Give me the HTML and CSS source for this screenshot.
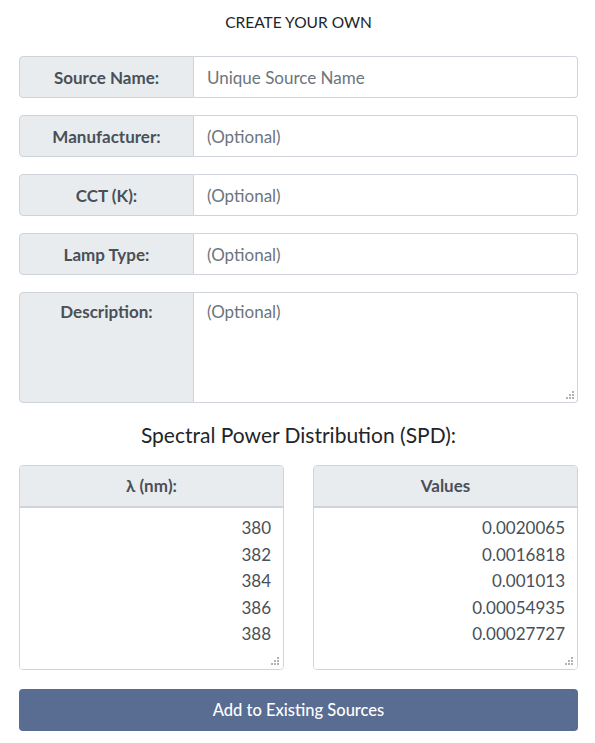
FILE: index.html
```html
<!DOCTYPE html>
<html>
<head>
<meta charset="utf-8">
<link rel="stylesheet" href="styles.css">
</head>
<body>
<div class="page">
  <h1 class="title">CREATE YOUR OWN</h1>
  <div class="group">
    <div class="label">Source Name:</div>
    <input class="field" type="text" placeholder="Unique Source Name">
  </div>
  <div class="group">
    <div class="label">Manufacturer:</div>
    <input class="field" type="text" placeholder="(Optional)">
  </div>
  <div class="group">
    <div class="label">CCT (K):</div>
    <input class="field" type="text" placeholder="(Optional)">
  </div>
  <div class="group">
    <div class="label">Lamp Type:</div>
    <input class="field" type="text" placeholder="(Optional)">
  </div>
  <div class="group group-tall">
    <div class="label label-top">Description:</div>
    <div class="area-wrap">
      <textarea class="field area" placeholder="(Optional)"></textarea>
      <svg class="grip" width="8" height="8" viewBox="0 0 8 8"><rect x="6" y="0" width="2" height="2"/><rect x="3" y="3" width="2" height="2"/><rect x="6" y="3" width="2" height="2"/><rect x="0" y="6" width="2" height="2"/><rect x="3" y="6" width="2" height="2"/><rect x="6" y="6" width="2" height="2"/></svg>
    </div>
  </div>
  <h2 class="spd">Spectral Power Distribution (SPD):</h2>
  <div class="cols">
    <div class="card">
      <div class="card-head">λ (nm):</div>
      <textarea class="card-body">380
382
384
386
388</textarea>
      <svg class="grip" width="8" height="8" viewBox="0 0 8 8"><rect x="6" y="0" width="2" height="2"/><rect x="3" y="3" width="2" height="2"/><rect x="6" y="3" width="2" height="2"/><rect x="0" y="6" width="2" height="2"/><rect x="3" y="6" width="2" height="2"/><rect x="6" y="6" width="2" height="2"/></svg>
    </div>
    <div class="card">
      <div class="card-head">Values</div>
      <textarea class="card-body">0.0020065
0.0016818
0.001013
0.00054935
0.00027727</textarea>
      <svg class="grip" width="8" height="8" viewBox="0 0 8 8"><rect x="6" y="0" width="2" height="2"/><rect x="3" y="3" width="2" height="2"/><rect x="6" y="3" width="2" height="2"/><rect x="0" y="6" width="2" height="2"/><rect x="3" y="6" width="2" height="2"/><rect x="6" y="6" width="2" height="2"/></svg>
    </div>
  </div>
  <button class="btn">Add to Existing Sources</button>
</div>
</body>
</html>
```
FILE: styles.css
```css
* { box-sizing: border-box; }
html, body { margin: 0; padding: 0; background: #fff; }
body {
  font-family: Lato, "Noto Sans", sans-serif;
  font-size: 17px;
  color: #212529;
}
.page {
  width: 559px;
  margin-left: 19px;
  padding-top: 12px;
}
.title {
  margin: 0 0 24px;
  font-size: 15.5px;
  font-weight: 400;
  text-align: center;
  line-height: 20px;
}
.group {
  display: flex;
  height: 42px;
  margin-bottom: 17px;
}
.group-tall { height: 111px; margin-bottom: 0; }
.label {
  width: 175px;
  flex: none;
  display: flex;
  align-items: center;
  justify-content: center;
  background: #e9ecef;
  border: 1px solid #ced4da;
  border-radius: 4px 0 0 4px;
  color: #495057;
  font-weight: 700;
  font-size: 17px;
}
.label-top { align-items: flex-start; padding-top: 8px; }
.field {
  flex: 1;
  min-width: 0;
  border: 1px solid #ced4da;
  border-left: none;
  border-radius: 0 4px 4px 0;
  padding: 0 13px;
  font-family: Lato, "Noto Sans", sans-serif;
  font-size: 17px;
  color: #495057;
  background: #fff;
  outline: none;
}
.field::placeholder { color: #6c757d; opacity: 1; }
.area-wrap {
  flex: 1;
  display: flex;
  position: relative;
}
.area {
  padding-top: 8px;
  resize: none;
  line-height: 22px;
}
.grip {
  position: absolute;
  right: 4px;
  bottom: 4px;
  fill: #b0b4b8;
}
.spd {
  margin: 0;
  height: 62px;
  display: flex;
  align-items: center;
  justify-content: center;
  font-size: 21px;
  font-weight: 400;
  color: #212529;
}
.cols {
  display: flex;
  justify-content: space-between;
}
.card {
  position: relative;
  width: 265px;
  height: 205px;
  display: flex;
  flex-direction: column;
  border: 1px solid #ced4da;
  border-radius: 4px;
  overflow: hidden;
}
.card-head {
  height: 42px;
  flex: none;
  display: flex;
  align-items: center;
  justify-content: center;
  padding-bottom: 2px;
  background: #e9ecef;
  border-bottom: 2px solid #ced4da;
  color: #495057;
  font-weight: 700;
}
.card-body {
  flex: 1;
  border: none;
  outline: none;
  resize: none;
  padding: 7px 12px 0 12px;
  text-align: right;
  font-family: Lato, "Noto Sans", sans-serif;
  font-size: 17px;
  line-height: 26.6px;
  color: #495057;
  background: #fff;
  overflow: hidden;
}
.btn {
  display: block;
  width: 100%;
  height: 42px;
  margin-top: 19px;
  border: none;
  border-radius: 4px;
  background: #596d93;
  color: #fff;
  font-family: Lato, "Noto Sans", sans-serif;
  font-size: 16.5px;
  font-weight: 500;
}
```
